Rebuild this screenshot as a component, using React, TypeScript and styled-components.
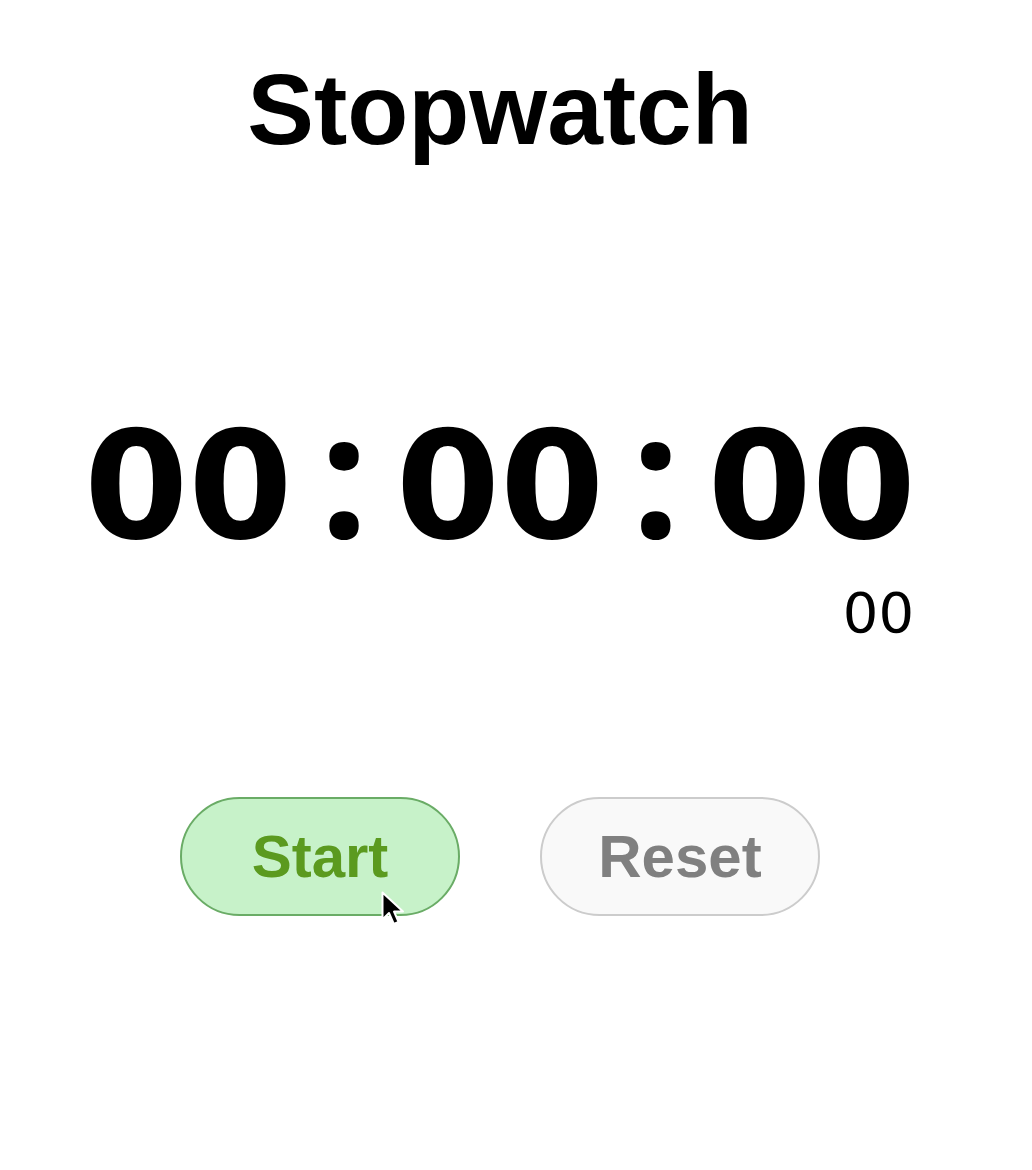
import React from 'react';
import styled, { createGlobalStyle } from 'styled-components';

const GlobalStyle = createGlobalStyle`
  html, body {
    margin: 0;
    padding: 0;
    background: #ffffff;
  }
`;

const Page = styled.div`
  width: 1000px;
  min-height: 1100px;
  display: flex;
  flex-direction: column;
  align-items: center;
  padding-top: 59px;
`;

const Title = styled.h1`
  margin: 0;
  font-family: 'Liberation Sans', Arial, sans-serif;
  font-weight: 700;
  font-size: 100px;
  line-height: 1;
  color: #000;
`;

const TimerBlock = styled.div`
  margin-top: 252px;
  display: flex;
  flex-direction: column;
  align-items: flex-end;
`;

const Digits = styled.div`
  display: flex;
  align-items: baseline;
  font-family: 'DejaVu Sans', Verdana, sans-serif;
  font-weight: 700;
  font-size: 150px;
  line-height: 1;
  color: #000;
`;

const Pair = styled.span``;

const Colon = styled.span`
  width: 103px;
  text-align: center;
  font-family: 'Open Sans', sans-serif;
  font-size: 172px;
  line-height: 0.65;
`;

const Centis = styled.div`
  margin-top: 24px;
  margin-right: 2px;
  font-family: 'DejaVu Sans', Verdana, sans-serif;
  font-weight: 400;
  font-size: 56px;
  line-height: 1;
  color: #000;
`;

const Controls = styled.div`
  margin-top: 156px;
  display: flex;
  gap: 80px;
`;

const ButtonSlot = styled.div`
  position: relative;
`;

const Button = styled.button<{ $variant: 'start' | 'reset' }>`
  display: block;
  width: 280px;
  height: 119px;
  border-radius: 60px;
  font-family: 'Liberation Sans', Arial, sans-serif;
  font-weight: 700;
  font-size: 60px;
  cursor: pointer;
  background: ${(p) => (p.$variant === 'start' ? '#c7f2c9' : '#f9f9f9')};
  border: 2px solid ${(p) => (p.$variant === 'start' ? '#6aac66' : '#cccccc')};
  color: ${(p) => (p.$variant === 'start' ? '#5b9a1f' : '#808080')};
`;

const Pointer = styled.svg`
  position: absolute;
  left: 201px;
  top: 94px;
  width: 24px;
  height: 38px;
  overflow: visible;
  pointer-events: none;
  z-index: 2;
`;

export default function App() {
  return (
    <>
      <GlobalStyle />
      <Page>
        <Title>Stopwatch</Title>
        <TimerBlock>
          <Digits>
            <Pair>00</Pair>
            <Colon>:</Colon>
            <Pair>00</Pair>
            <Colon>:</Colon>
            <Pair>00</Pair>
          </Digits>
          <Centis>00</Centis>
        </TimerBlock>
        <Controls>
          <ButtonSlot>
            <Button $variant="start">Start</Button>
            <Pointer viewBox="0 0 24 38">
              <path d="M1.5 1.5 L1.5 28.5 L8 22 L12.8 33 L17.6 31 L13 20.6 L22 20.6 Z" fill="#000" stroke="#fff" strokeWidth="2" strokeLinejoin="round" />
            </Pointer>
          </ButtonSlot>
          <ButtonSlot>
            <Button $variant="reset">Reset</Button>
          </ButtonSlot>
        </Controls>
      </Page>
    </>
  );
}
